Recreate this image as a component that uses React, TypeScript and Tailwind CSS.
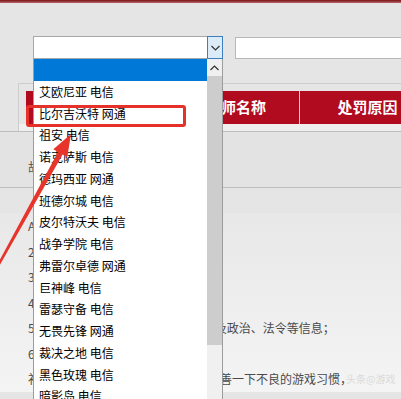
import React from 'react';

const servers = [
  '艾欧尼亚 电信',
  '比尔吉沃特 网通',
  '祖安 电信',
  '诺克萨斯 电信',
  '德玛西亚 网通',
  '班德尔城 电信',
  '皮尔特沃夫 电信',
  '战争学院 电信',
  '弗雷尔卓德 网通',
  '巨神峰 电信',
  '雷瑟守备 电信',
  '无畏先锋 网通',
  '裁决之地 电信',
  '黑色玫瑰 电信',
  '暗影岛 电信',
];

const notes = [
  'A、以下为违规处罚名单：',
  '2、恶意挂机、消极比赛；',
  '3、使用侮辱性语言辱骂他人；',
  '4、使用第三方外挂软件；',
  '5、不得在游戏中发布或传播任何涉及政治、法令等信息；',
  '6、恶意举报其他玩家；',
  '补充说明：希望各位玩家借此机会改善一下不良的游戏习惯，',
];

const Chevron = ({ up }: { up?: boolean }) => (
  <svg width="9" height="6" viewBox="0 0 9 6" className="block">
    <polyline
      points={up ? '0.5,5 4.5,1 8.5,5' : '0.5,1 4.5,5 8.5,1'}
      fill="none"
      stroke="#333"
      strokeWidth="1.2"
    />
  </svg>
);

const ServerDropdown: React.FC = () => (
  <div className="absolute left-[33px] top-[59px] w-[190px] h-[345px] bg-white border-l border-r border-[#9c9c9c] flex">
    <div className="flex-1 text-[12px] text-black">
      <div className="h-[21.75px] bg-[#0078d7]" />
      {servers.map(name => (
        <div key={name} className="h-[21.75px] leading-[21.75px] pl-[5px] whitespace-nowrap">
          {name}
        </div>
      ))}
    </div>
    <div className="w-[15px] shrink-0 bg-[#f0f0f0] flex flex-col">
      <div className="h-[17px] flex items-center justify-center">
        <Chevron up />
      </div>
      <div className="h-[269px] bg-[#cdcdcd]" />
    </div>
  </div>
);

export default function App() {
  return (
    <div
      className="relative w-[401px] h-[399px] overflow-hidden bg-[#e5e5e5]"
      style={{ fontFamily: '"Noto Sans CJK SC", "Noto Sans", sans-serif' }}
    >
      <div className="h-[3px] bg-gradient-to-b from-[#7a0a12] to-[#b8656a]" />

      {/* search row */}
      <div className="mt-[33px] flex items-start gap-[12px] pl-[33px]">
        <div className="w-[190px] shrink-0 h-[23px] bg-white border border-[#a8a8a8] flex justify-end">
          <div className="w-[16px] h-[23px] -mt-px -mr-px bg-[#dcebf8] border border-[#3d7fbf] flex items-center justify-center">
            <Chevron />
          </div>
        </div>
        <div className="w-[200px] shrink-0 h-[22px] mt-px bg-white border border-[#b8b8b8]" />
      </div>

      {/* table */}
      <div className="mt-[24px]">
        <div className="ml-[18px] border-t border-l border-[#cdcdcd] pl-[7px] pt-[7px]">
          <div className="h-[33px] bg-[#b10b1f] flex text-white font-bold text-[15px] whitespace-nowrap">
            <div className="w-[60px] shrink-0 flex items-center justify-center">序号</div>
            <div className="w-[71px] shrink-0 flex items-center justify-center border-l border-[#d77d88]">大区</div>
            <div className="w-[142px] shrink-0 flex items-center justify-center border-l border-[#d77d88]">召唤师名称</div>
            <div className="w-[136px] shrink-0 flex items-center justify-center border-l border-[#f1c9ce]">处罚原因</div>
          </div>
        </div>
        <div className="h-[7px] ml-[18px] border-l border-[#cdcdcd] bg-[#efefef]" />
        <div className="h-[57px] border-t border-b border-[#bdbdbd] bg-[#e3e3e3] pl-[28px] pt-[27px] text-[12px] leading-[16px] text-[#555]">
          故特此公告
        </div>
        <div className="mt-[25px] pl-[28px] text-[12px] leading-[25.5px] text-[#4a4a4a] whitespace-nowrap bg-gradient-to-b from-[#e8e8e8] to-[#f4f4f4]">
          {notes.map(line => (
            <div key={line}>{line}</div>
          ))}
        </div>
      </div>

      <ServerDropdown />

      {/* highlight box */}
      <div className="absolute left-[26px] top-[105px] w-[160px] h-[22px] border-[3px] border-[#e6302a] rounded-[3px]" />

      {/* arrow */}
      <svg className="absolute left-0 top-0 pointer-events-none" width="401" height="399" viewBox="0 0 401 399">
        <polygon
          points="58.06,151.97 53.34,149.35 71,134 67.32,157.11 62.6,154.5 -1.35,267 -3.45,265.8"
          fill="#e8352b"
        />
      </svg>

      <div className="absolute left-[346px] top-[371px] text-[10px] text-[#dadada] whitespace-nowrap">
        头条@游戏
      </div>
    </div>
  );
}
